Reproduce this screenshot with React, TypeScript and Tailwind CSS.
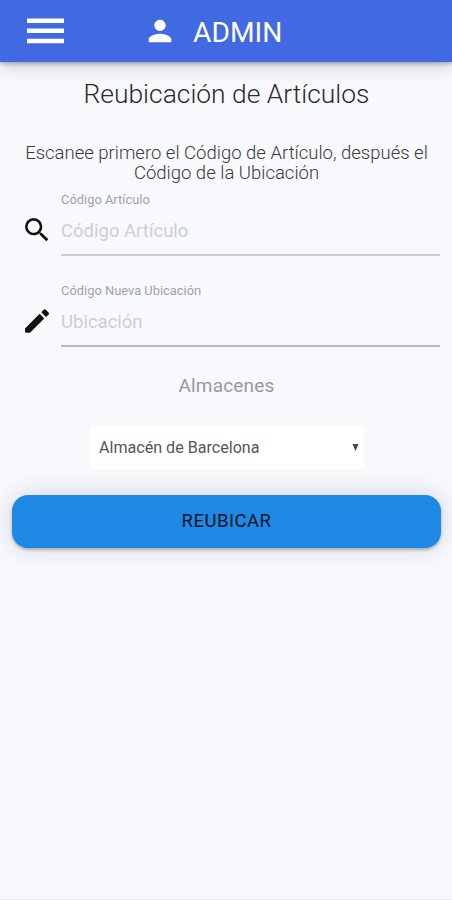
import { useState } from "react";
import { MdPerson, MdSearch } from "react-icons/md";

type FieldProps = {
  id: string;
  label: string;
  placeholder: string;
  icon: React.ReactNode;
  lineClassName: string;
};

function PencilIcon() {
  return (
    <svg viewBox="0 0 32 32" className="h-8 w-8" fill="currentColor">
      <path d="M4 23.4 18.6 8.8l4.7 4.7L9 27.8H5.4A1.4 1.4 0 0 1 4 26.4z" />
      <path d="M20.3 7.2 22.6 4.8a1.7 1.7 0 0 1 2.3 0l2.6 2.6a1.7 1.7 0 0 1 0 2.3L25 11.9z" />
    </svg>
  );
}

function Field({ id, label, placeholder, icon, lineClassName }: FieldProps) {
  return (
    <div className="flex h-[66px] pr-3 pl-5">
      <div className="w-[41px] shrink-0 pt-[24px] pl-[0.5px] text-[#111111]">{icon}</div>
      <div className={`flex flex-1 flex-col border-b-2 ${lineClassName}`}>
        <label htmlFor={id} className="pt-px text-[12.9px] leading-[18px] text-[#a2a2a6]">
          {label}
        </label>
        <input
          id={id}
          placeholder={placeholder}
          className="mt-[10px] h-[26px] w-full bg-transparent text-[18.5px] text-[#444444] outline-none placeholder:text-[#cdced2]"
        />
      </div>
    </div>
  );
}

export default function App() {
  const [warehouse, setWarehouse] = useState("barcelona");

  return (
    <main className="flex min-h-screen flex-col border-b border-[#e9eaee] bg-[#f8f9fd] font-['Roboto',sans-serif]">
      <header className="flex h-[62px] items-center bg-[#4169e1] text-white shadow-[0_2px_4px_rgba(0,0,0,0.25),0_5px_18px_rgba(0,0,0,0.16)]">
        <button type="button" aria-label="Menú" className="mb-px ml-[27px] w-[37px]">
          <svg viewBox="0 0 37 26" className="h-[26px] w-[37px]" fill="currentColor">
            <path d="M0 .4h37v4.5H0zM0 10.6h37v4.500H0zM0 20.700h37v4.500H0z" />
          </svg>
        </button>
        <MdPerson className="mb-px ml-[79px] h-[34px] w-[34px]" />
        <span className="ml-[16px] pt-[4px] text-[28.2px] leading-[34px]">ADMIN</span>
      </header>

      <h1 className="mt-[16px] pl-px text-center text-[26.4px] leading-[32px] font-light text-[#2b2b2d]">
        Reubicación de Artículos
      </h1>
      <p className="mt-[33px] px-4 pl-[17px] text-center text-[18.5px] leading-[20px] font-light text-[#3a3a3c]">
        Escanee primero el Código de Artículo, después el Código de la Ubicación
      </p>

      <form className="mt-[7px] flex flex-col" onSubmit={(event) => event.preventDefault()}>
        <div className="flex flex-col gap-[25px]">
          <Field
            id="article"
            label="Código Artículo"
            placeholder="Código Artículo"
            icon={<MdSearch className="h-8 w-8" />}
            lineClassName="border-[#cccdd1]"
          />
          <Field
            id="location"
            label="Código Nueva Ubicación"
            placeholder="Ubicación"
            icon={<PencilIcon />}
            lineClassName="border-[#b9babd]"
          />
        </div>

        <label
          htmlFor="warehouse"
          className="mt-[27px] pl-px text-center text-[19px] leading-[24px] tracking-[0.2px] text-[#98989c]"
        >
          Almacenes
        </label>
        <div className="mt-[28px] ml-[90px] flex h-[43px] w-[274px] items-center rounded-[3px] bg-white pr-[5px] pl-[9px]">
          <select
            id="warehouse"
            value={warehouse}
            onChange={(event) => setWarehouse(event.target.value)}
            className="h-full flex-1 appearance-none bg-transparent pt-[2px] text-[16.1px] text-[#555557] outline-none"
          >
            <option value="barcelona">Almacén de Barcelona</option>
          </select>
          <svg viewBox="0 0 7 7" className="h-[7px] w-[7px]" fill="#444444">
            <path d="M.5 0h6l-3 7z" />
          </svg>
        </div>

        <button
          type="submit"
          className="mt-[26px] mr-[11px] ml-[12px] h-[53px] rounded-[16px] bg-[#1e88e5] text-[18.5px] tracking-[0.5px] text-[#0c1524] shadow-[0_2px_3px_rgba(0,0,0,0.25),0_0_24px_rgba(30,30,60,0.17)]"
        >
          REUBICAR
        </button>
      </form>
    </main>
  );
}
